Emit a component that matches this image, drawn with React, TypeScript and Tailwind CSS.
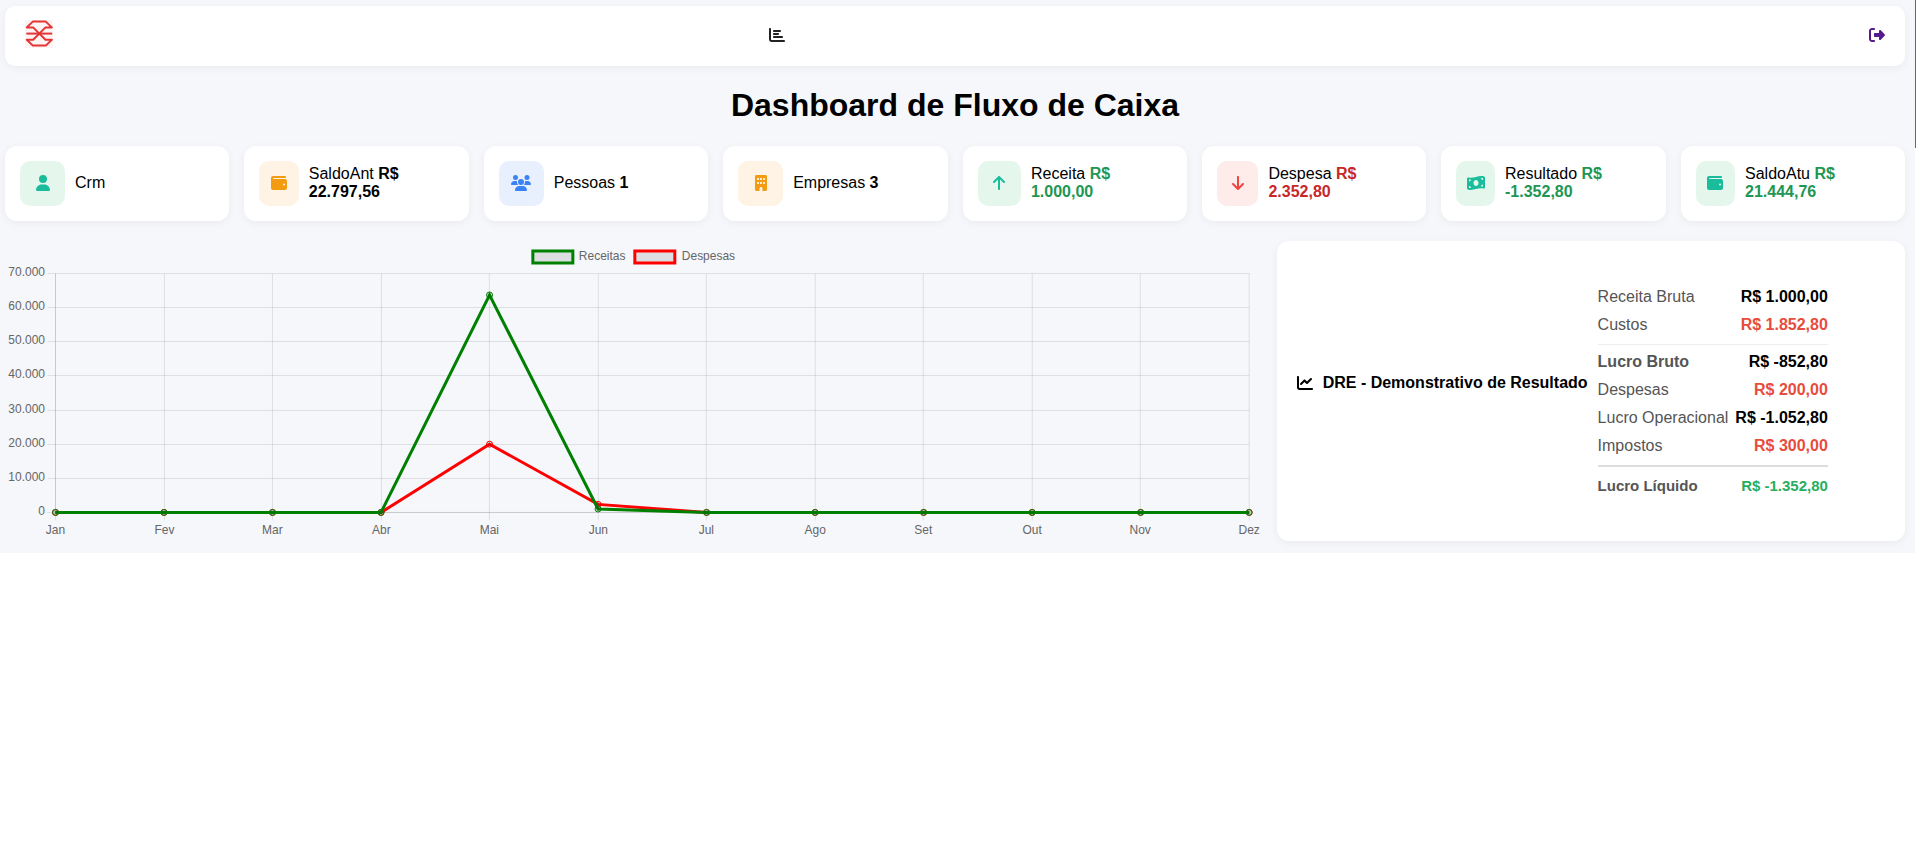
import {
  FaArrowDown,
  FaArrowUp,
  FaBuilding,
  FaChartBar,
  FaChartLine,
  FaMoneyBillWave,
  FaRightFromBracket,
  FaUser,
  FaUsers,
  FaWallet,
} from "react-icons/fa6"

const cards = [
  { label: "Crm", value: "", icon: FaUser, iconSize: "w-4", iconClass: "bg-[#e5f7ed] text-[#1abc9c]", valueClass: "" },
  { label: "SaldoAnt", value: "R$ 22.797,56", icon: FaWallet, iconSize: "w-4", iconClass: "bg-[#fff3e6] text-[#f39c12]", valueClass: "text-black" },
  { label: "Pessoas", value: "1", icon: FaUsers, iconSize: "w-5", iconClass: "bg-[#e8f0fe] text-[#3b82f6]", valueClass: "text-black" },
  { label: "Empresas", value: "3", icon: FaBuilding, iconSize: "w-4", iconClass: "bg-[#fff3e6] text-[#f39c12]", valueClass: "text-black" },
  { label: "Receita", value: "R$ 1.000,00", icon: FaArrowUp, iconSize: "w-4", iconClass: "bg-[#e5f7ed] text-[#1abc9c]", valueClass: "text-[#219653]" },
  { label: "Despesa", value: "R$ 2.352,80", icon: FaArrowDown, iconSize: "w-4", iconClass: "bg-[#fdecea] text-[#ef4444]", valueClass: "text-[#c62828]" },
  { label: "Resultado", value: "R$ -1.352,80", icon: FaMoneyBillWave, iconSize: "w-[18px]", iconClass: "bg-[#e5f7ed] text-[#1abc9c]", valueClass: "text-[#219653]" },
  { label: "SaldoAtu", value: "R$ 21.444,76", icon: FaWallet, iconSize: "w-4", iconClass: "bg-[#e5f7ed] text-[#1abc9c]", valueClass: "text-[#219653]" },
]

export default function App() {
  return (
    <div className="flex text-base leading-[18px] text-black font-['Liberation_Sans',Arial,sans-serif]">
      <main className="min-w-0 flex-1 bg-[#f5f7fb] pt-1.5 pr-2.5 pb-3 pl-[5px]">
        <Header />
        <h1 className="pt-[21px] pb-[22px] text-center text-[32px] leading-[37px] font-bold">Dashboard de Fluxo de Caixa</h1>

        <div className="grid grid-cols-8 gap-[15px]">
          {cards.map((card) => (
            <Card key={card.label} {...card} />
          ))}
        </div>

        <div className="mt-5 grid grid-cols-[2fr_1fr] gap-[15px]">
          <Chart />
          <Dre />
        </div>
      </main>
      {/* Right edge line */}
      <div className="h-[148px] w-px bg-[#66666b]" />
    </div>
  )
}

function Header() {
  return (
    <header className="flex h-[60px] items-center justify-between rounded-[10px] bg-white px-5 pb-0.5 shadow-[0_2px_8px_rgba(0,0,0,0.05)]">
      <a href="#" aria-label="Home" className="pb-0.5">
        <Logo />
      </a>
      <a href="#" aria-label="Relatórios" className="text-[#222222]">
        <FaChartBar />
      </a>
      <nav className="flex w-96 justify-end">
        <a href="#" aria-label="Sair" className="text-[#551a8b]">
          <FaRightFromBracket />
        </a>
      </nav>
    </header>
  )
}

function Logo() {
  return (
    <svg viewBox="0 0 28 28" className="h-7 w-7 bg-[#fdf3f3]" fill="none" stroke="#e53434" strokeWidth="2" strokeLinejoin="round">
      <path d="M7.8 1.6H20.8L26.8 7.4H20.5L14.3 13.6L8.1 7.4H1.8Z" />
      <path d="M7.8 25.6H20.8L26.8 19.8H20.5L14.3 13.6L8.1 19.8H1.8Z" />
      <path d="M1.4 13.6H27.2" />
    </svg>
  )
}

// Summary card
function Card({ label, value, icon: Icon, iconSize, iconClass, valueClass }) {
  return (
    <div className="flex items-center gap-2.5 rounded-xl bg-white p-[15px] shadow-[0_2px_8px_rgba(0,0,0,0.05)]">
      <div className={`flex h-[45px] w-[45px] items-center justify-center rounded-[10px] pb-px ${iconClass}`}>
        <Icon className={`h-4 shrink-0 ${iconSize}`} />
      </div>
      <p className="pb-0.5">
        {label} <b className={valueClass}>{value}</b>
      </p>
    </div>
  )
}

const months = ["Jan", "Fev", "Mar", "Abr", "Mai", "Jun", "Jul", "Ago", "Set", "Out", "Nov", "Dez"]
const ticks = ["0", "10.000", "20.000", "30.000", "40.000", "50.000", "60.000", "70.000"]
const receitas = [0, 0, 0, 0, 63700, 1000, 0, 0, 0, 0, 0, 0]
const despesas = [0, 0, 0, 0, 20000, 2352.8, 0, 0, 0, 0, 0, 0]

const area = { left: 50.5, right: 1244.5, top: 32.5, bottom: 271.5 }
const getX = (i: number) => area.left + (i * (area.right - area.left)) / 11
const getY = (value: number) => area.bottom - (value * (area.bottom - area.top)) / 70000
const snap = (n: number) => Math.floor(n) + 0.5

function Chart() {
  return (
    <svg
      viewBox="0 0 1257 300"
      preserveAspectRatio="xMinYMin meet"
      className="h-[300px] w-full text-xs"
      fill="#666666"
      role="img"
      aria-label="Receitas e Despesas por mês"
    >
      <rect x="528" y="10" width="40" height="12" fill="#dddee1" stroke="green" strokeWidth="3" />
      <text x="574" y="19">Receitas</text>
      <rect x="630" y="10" width="40" height="12" fill="#dddee1" stroke="red" strokeWidth="3" />
      <text x="677" y="19">Despesas</text>

      {ticks.map((tick, i) => {
        const y = snap(getY(i * 10000))
        return (
          <g key={tick}>
            <path d={`M${area.left - 8} ${y}H${area.right}`} stroke="black" strokeOpacity="0.1" />
            <text x="40" y={Math.floor(y + 3)} textAnchor="end">{tick}</text>
          </g>
        )
      })}
      {months.map((month, i) => {
        const x = snap(getX(i))
        return (
          <g key={month}>
            <path d={`M${x} ${area.top}V${area.bottom + 8}`} stroke="black" strokeOpacity="0.1" />
            <text x={x} y="293" textAnchor="middle">{month}</text>
          </g>
        )
      })}
      <path d={`M${area.left} ${area.top}V${area.bottom}H${area.right}`} fill="none" stroke="black" strokeOpacity="0.1" />

      <Series values={despesas} color="red" />
      <Series values={receitas} color="green" />
    </svg>
  )
}

function Series({ values, color }: { values: number[]; color: string }) {
  return (
    <g stroke={color}>
      <polyline points={values.map((v, i) => `${getX(i)},${getY(v)}`).join(" ")} fill="none" strokeWidth="3" />
      {values.map((v, i) => (
        <circle key={i} cx={getX(i)} cy={getY(v)} r="3" fill="black" fillOpacity="0.1" />
      ))}
    </g>
  )
}

function Dre() {
  return (
    <section className="flex h-[300px] items-center gap-2.5 rounded-xl bg-white p-5 shadow-[0_2px_8px_rgba(0,0,0,0.05)]">
      <h2 className="mb-4 flex items-center gap-2.5 font-bold whitespace-nowrap">
        <FaChartLine />
        DRE - Demonstrativo de Resultado
      </h2>
      <table className="border-separate border-spacing-0 whitespace-nowrap">
        <tbody>
          <Row label="Receita Bruta" value="R$ 1.000,00" cell="py-[5px]" />
          <Row label="Custos" value="R$ 1.852,80" cell="pt-[5px] pb-2.5" valueClass="text-[#e74c3c]" />
          <Row label="Lucro Bruto" value="R$ -852,80" cell="border-t border-[#eeeeee] pt-2 pb-[5px]" labelClass="font-bold" />
          <Row label="Despesas" value="R$ 200,00" cell="py-[5px]" valueClass="text-[#e74c3c]" />
          <Row label="Lucro Operacional" value="R$ -1.052,80" cell="py-[5px]" />
          <Row label="Impostos" value="R$ 300,00" cell="pt-[5px] pb-2.5" valueClass="text-[#e74c3c]" />
          <Row
            label="Lucro Líquido"
            value="R$ -1.352,80"
            cell="border-t-2 border-[#dddddd] pt-2.5 pb-[5px] text-[15px]"
            labelClass="font-bold"
            valueClass="text-[#27ae60]"
          />
        </tbody>
      </table>
    </section>
  )
}

type RowProps = {
  label: string
  value: string
  cell: string
  labelClass?: string
  valueClass?: string
}

function Row({ label, value, cell, labelClass = "font-normal", valueClass = "text-black" }: RowProps) {
  return (
    <tr>
      <th scope="row" className={`pr-[7px] text-left text-[#555555] ${cell} ${labelClass}`}>
        {label}
      </th>
      <td className={`text-right font-bold ${cell} ${valueClass}`}>{value}</td>
    </tr>
  )
}
